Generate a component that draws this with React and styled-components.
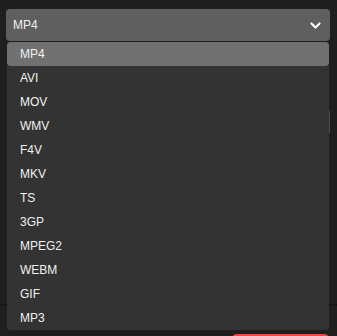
import React, { useState } from 'react'
import styled, { createGlobalStyle } from 'styled-components'

const formats = ['MP4', 'AVI', 'MOV', 'WMV', 'F4V', 'MKV', 'TS', '3GP', 'MPEG2', 'WEBM', 'GIF', 'MP3']

const GlobalStyle = createGlobalStyle`
	html, body {
		margin: 0;
		padding: 0;
		background: #1f1f1f;
		font-family: 'Liberation Sans', Arial, sans-serif;
	}
`

const Page = styled.div`
	width: 337px;
	height: 336px;
	overflow: hidden;
	display: flex;
	flex-direction: column;
	background: #1f1f1f;
	& > * {
		flex-shrink: 0;
	}
`

const Field = styled.div`
	position: relative;
	margin: 9px 7px 0 6px;
`

const SelectBox = styled.div`
	height: 32px;
	display: flex;
	align-items: center;
	justify-content: space-between;
	padding: 0 8px 0 7px;
	background: #5f5f5f;
	border-radius: 4px;
	color: #f2f2f2;
	font-size: 12px;
	svg {
		width: 13px;
		height: 13px;
	}
`

const Menu = styled.ul`
	position: absolute;
	top: 33px;
	left: 1px;
	right: 1px;
	margin: 0;
	padding: 0;
	list-style: none;
	background: #333333;
	border-radius: 3px;
	z-index: 5;
`

const Option = styled.li`
	height: 24px;
	display: flex;
	align-items: center;
	padding-left: 13px;
	font-size: 12px;
	color: #f0f0f0;
	border-radius: 4px;
	background: ${p => (p.$active ? '#717171' : 'transparent')};
`

const InputBox = styled.div`
	margin: 68px 7px 0 40px;
	height: 24px;
	border: 1px solid #4c4c4c;
	border-radius: 3px;
`

const Divider = styled.div`
	margin-top: 169px;
	height: 2px;
	background: #141414;
`

const Footer = styled.div`
	display: flex;
	justify-content: flex-end;
	padding: 28px 7px 0 0;
`

const Danger = styled.button`
	width: 99px;
	height: 28px;
	border: none;
	border-radius: 6px;
	background: #f04848;
`

const Chevron = () => (
	<svg viewBox="0 0 16 16" fill="none">
		<path d="M3 5.5 L8 10.5 L13 5.5" stroke="#ffffff" strokeWidth="2.6" strokeLinecap="round" strokeLinejoin="round" />
	</svg>
)

const App = () => {
	const [value] = useState('MP4')
	return (
		<Page>
			<GlobalStyle />
			<Field>
				<SelectBox>
					<span>{value}</span>
					<Chevron />
				</SelectBox>
				<Menu>
					{formats.map(f => (
						<Option key={f} $active={f === value}>
							{f}
						</Option>
					))}
				</Menu>
			</Field>
			<InputBox />
			<Divider />
			<Footer>
				<Danger aria-label="Delete" />
			</Footer>
		</Page>
	)
}

export default App
